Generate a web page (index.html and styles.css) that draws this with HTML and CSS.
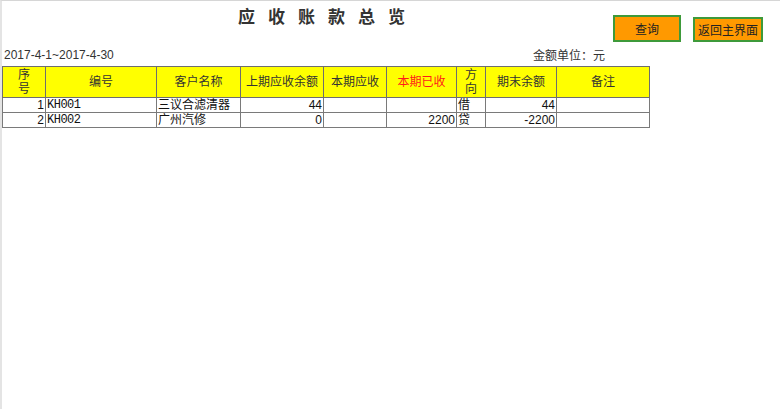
FILE: index.html
```html
<!DOCTYPE html>
<html lang="zh">
<head>
<meta charset="utf-8">
<title>应收账款总览</title>
<link rel="stylesheet" href="styles.css">
</head>
<body>
<div class="page">
  <div class="top">
    <h1 class="title">应收账款总览</h1>
    <div class="actions">
      <button class="btn btn-query">查询</button>
      <button class="btn btn-back">返回主界面</button>
    </div>
  </div>
  <div class="info">
    <span class="period">2017-4-1~2017-4-30</span>
    <span class="unit">金额单位：元</span>
  </div>
  <table class="grid">
    <colgroup>
      <col class="c1"><col class="c2"><col class="c3"><col class="c4"><col class="c5">
      <col class="c6"><col class="c7"><col class="c8"><col class="c9">
    </colgroup>
    <thead>
      <tr>
        <th>序<br>号</th>
        <th>编号</th>
        <th>客户名称</th>
        <th>上期应收余额</th>
        <th>本期应收</th>
        <th class="red">本期已收</th>
        <th>方<br>向</th>
        <th>期末余额</th>
        <th>备注</th>
      </tr>
    </thead>
    <tbody>
      <tr>
        <td class="num">1</td><td class="code">KH001</td><td>三议合滤清器</td><td class="num">44</td>
        <td></td><td></td><td>借</td><td class="num">44</td><td></td>
      </tr>
      <tr>
        <td class="num">2</td><td class="code">KH002</td><td>广州汽修</td><td class="num">0</td>
        <td></td><td class="num">2200</td><td>贷</td><td class="num">-2200</td><td></td>
      </tr>
    </tbody>
  </table>
</div>
</body>
</html>
```

FILE: styles.css
```css
html, body {
  margin: 0;
  padding: 0;
  background: #ffffff;
}

body {
  font-family: "Liberation Sans", "Noto Sans CJK SC", sans-serif;
  color: #222;
}

.page {
  width: 780px;
  height: 409px;
  border-top: 1px solid #d6d6d6;
  border-left: 2px solid #e4e4e4;
  box-sizing: border-box;
}

.top {
  display: flex;
  align-items: flex-start;
  height: 45px;
}

.title {
  margin: 5px 0 0 236px;
  font-family: "Noto Sans CJK SC", sans-serif;
  font-size: 17px;
  font-weight: bold;
  letter-spacing: 13px;
  line-height: 20px;
  color: #333;
}

.actions {
  display: flex;
  gap: 12px;
  margin-left: auto;
  margin-right: 17px;
  margin-top: 14px;
}

.btn {
  background: #ff9900;
  border: 2px solid #3e9a3a;
  font-family: "Noto Sans CJK SC", sans-serif;
  font-size: 12px;
  color: #222;
  padding: 0;
  height: 27px;
  line-height: 20px;
}

.btn-query {
  width: 68px;
}

.btn-back {
  width: 70px;
  height: 25px;
  margin-top: 2px;
}

.info {
  display: flex;
  justify-content: space-between;
  width: 601px;
  height: 20px;
  font-size: 12px;
  line-height: 18px;
  color: #333;
  padding-left: 2px;
}

.unit {
  font-family: "Noto Sans CJK SC", sans-serif;
}

.grid {
  border-collapse: collapse;
  table-layout: fixed;
  width: 647px;
  font-size: 12px;
  font-family: "Liberation Sans", "Noto Sans CJK SC", sans-serif;
}

.c1 { width: 43px; }
.c2 { width: 111px; }
.c3 { width: 84px; }
.c4 { width: 83px; }
.c5 { width: 63px; }
.c6 { width: 70px; }
.c7 { width: 29px; }
.c8 { width: 71px; }
.c9 { width: 93px; }

.grid th {
  background: #ffff00;
  border: 1px solid #6e6e6e;
  height: 30px;
  font-weight: normal;
  color: #333;
  line-height: 14px;
  padding: 0;
  text-align: center;
}

.grid th.red {
  color: #ff1a1a;
}

.grid td {
  border: 1px solid #7a7a7a;
  height: 14px;
  line-height: 14px;
  padding: 0 1px;
  color: #111;
  white-space: nowrap;
  overflow: hidden;
}

.grid td.num {
  text-align: right;
}

.grid td.code {
  font-family: "Liberation Mono", monospace;
  font-size: 12px;
  letter-spacing: -0.5px;
}
```
